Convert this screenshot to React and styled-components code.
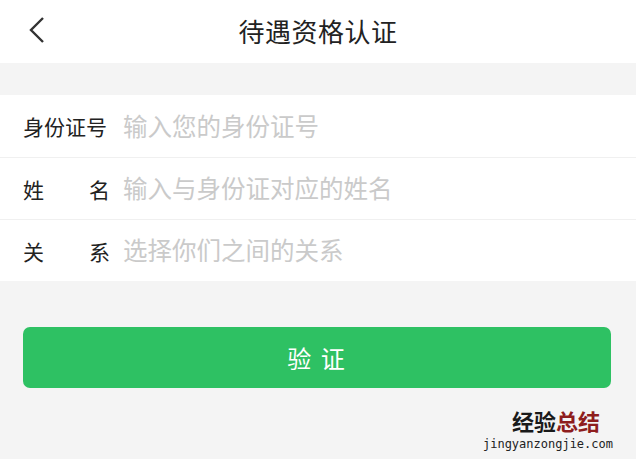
import styled, { createGlobalStyle } from "styled-components";

const GlobalStyle = createGlobalStyle`
  html, body {
    margin: 0;
    padding: 0;
    background: #f4f4f4;
    font-family: "Noto Sans CJK SC", "Noto Sans", sans-serif;
  }
`;

const fields = [
  { label: ["身份证号"], placeholder: "输入您的身份证号" },
  { label: ["姓", "名"], placeholder: "输入与身份证对应的姓名" },
  { label: ["关", "系"], placeholder: "选择你们之间的关系" },
];

const App = () => {
  return (
    <Page>
      <GlobalStyle />
      <Header>
        <BackButton>
          <svg width="18" height="28" viewBox="0 0 18 28">
            <path d="M15 2 L3 14 L15 26" fill="none" stroke="#333" strokeWidth="2.4" />
          </svg>
        </BackButton>
        <Title>待遇资格认证</Title>
      </Header>
      <Form>
        {fields.map((f, i) => (
          <Row key={i}>
            <Label $spread={f.label.length > 1}>
              {f.label.map((c, j) => (
                <span key={j}>{c}</span>
              ))}
            </Label>
            <Placeholder>{f.placeholder}</Placeholder>
          </Row>
        ))}
      </Form>
      <ButtonWrap>
        <SubmitButton>验 证</SubmitButton>
      </ButtonWrap>
      <Watermark>
        <Brand>
          经验<Red>总结</Red>
        </Brand>
        <Url>jingyanzongjie.com</Url>
      </Watermark>
    </Page>
  );
};

export default App;

const Page = styled.div`
  width: 636px;
  height: 459px;
  background: #f4f4f4;
  overflow: hidden;
`;

const Header = styled.div`
  height: 63px;
  background: #fff;
  display: flex;
  align-items: center;
  justify-content: center;
  position: relative;
`;

const BackButton = styled.div`
  position: absolute;
  left: 28px;
  top: 16px;
  display: flex;
`;

const Title = styled.div`
  font-size: 26px;
  color: #222;
  letter-spacing: 0.5px;
  margin-top: -2px;
`;

const Form = styled.div`
  margin-top: 32px;
  background: #fff;
`;

const Row = styled.div`
  height: 62px;
  display: flex;
  align-items: center;
  padding-left: 23px;
  box-sizing: border-box;
  & + & {
    border-top: 1px solid #f0f0f0;
  }
`;

const Label = styled.div`
  width: 87px;
  display: flex;
  justify-content: ${(p) => (p.$spread ? "space-between" : "flex-start")};
  font-size: 21px;
  color: #222;
  margin-right: 13px;
  white-space: nowrap;
`;

const Placeholder = styled.div`
  font-size: 24.5px;
  color: #cacaca;
  margin-top: -2px;
`;

const ButtonWrap = styled.div`
  padding: 46px 25px 0 23px;
`;

const SubmitButton = styled.div`
  height: 61px;
  border-radius: 7px;
  background: #2ec163;
  color: #fff;
  font-size: 24px;
  display: flex;
  align-items: center;
  justify-content: center;
  letter-spacing: 2px;
`;

const Watermark = styled.div`
  display: flex;
  flex-direction: column;
  align-items: flex-end;
  padding: 20px 23px 0 0;
`;

const Brand = styled.div`
  font-size: 22px;
  font-weight: 700;
  color: #1a1a1a;
  line-height: 24px;
  margin-right: 13px;
`;

const Red = styled.span`
  color: #8e1d1d;
`;

const Url = styled.div`
  font-family: "DejaVu Sans Mono", "Liberation Mono", monospace;
  font-size: 12px;
  color: #222;
  line-height: 18px;
  margin-top: 3px;
`;
